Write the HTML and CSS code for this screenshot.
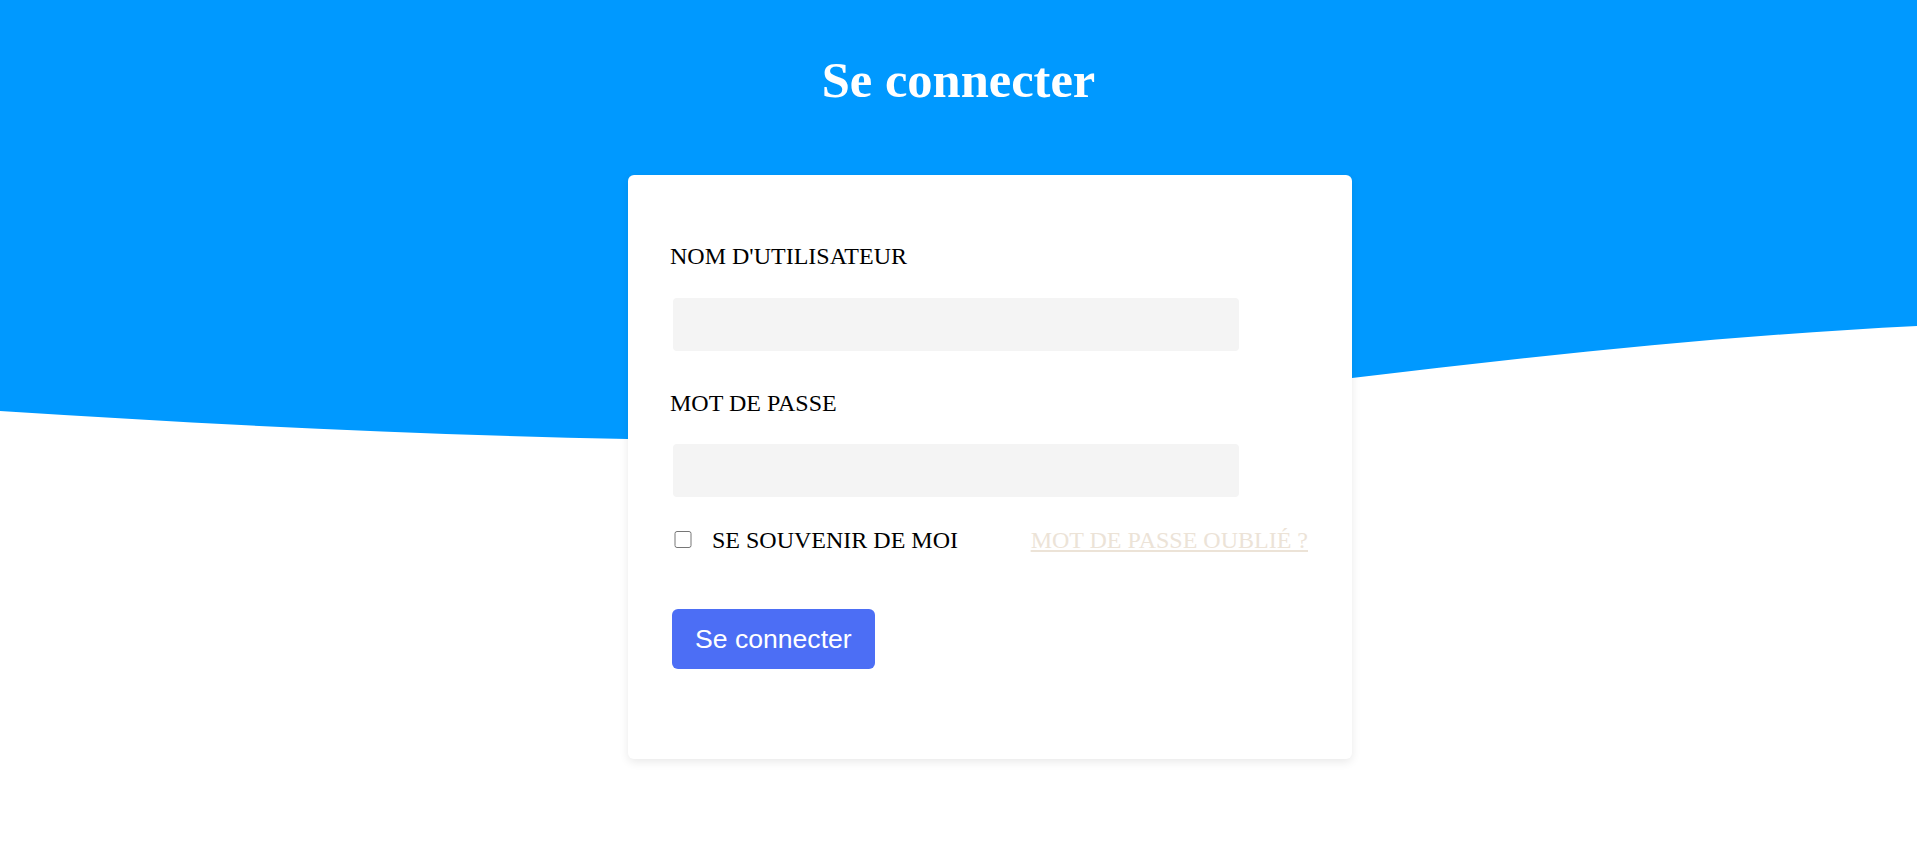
FILE: index.html
```html
<!DOCTYPE html>
<html lang="fr">
<head>
<meta charset="utf-8">
<title>Se connecter</title>
<link rel="stylesheet" href="styles.css">
</head>
<body>
<div class="page">
  <svg class="wave" viewBox="0 0 1917 450" preserveAspectRatio="none" aria-hidden="true">
    <path fill="#0099ff" d="M0 0 L0 411 C209 424.6 419 434.8 628 439 C869 443.8 1111 406.9 1352 378 C1540 355.4 1729 335.4 1917 326 L1917 0 Z"/>
  </svg>
  <h1 class="title">Se connecter</h1>
  <div class="card-wrap">
    <form class="card">
      <label class="field-label" for="user">NOM D'UTILISATEUR</label>
      <input class="field-input" id="user" type="text">
      <label class="field-label second" for="pass">MOT DE PASSE</label>
      <input class="field-input" id="pass" type="password">
      <div class="options">
        <label class="remember"><input class="check" type="checkbox"><span>SE SOUVENIR DE MOI</span></label>
        <a class="forgot" href="#">MOT DE PASSE OUBLIÉ ?</a>
      </div>
      <button class="submit" type="button">Se connecter</button>
    </form>
  </div>
</div>
</body>
</html>
```
FILE: styles.css
```css
html, body {
  margin: 0;
  padding: 0;
  background: #ffffff;
}

body {
  font-family: "Liberation Serif", "Times New Roman", serif;
  color: #000;
}

.page {
  position: relative;
  width: 100%;
  min-height: 862px;
  overflow: hidden;
}

.wave {
  position: absolute;
  top: 0;
  left: 0;
  width: 100%;
  height: 450px;
  z-index: 0;
  display: block;
}

.title {
  position: relative;
  z-index: 1;
  margin: 52px 0 0;
  font-size: 50.5px;
  line-height: 56px;
  font-weight: bold;
  color: #ffffff;
  text-align: center;
}

.card-wrap {
  position: relative;
  z-index: 1;
  display: flex;
  justify-content: center;
  padding-left: 63px;
  margin-top: 67px;
}

.card {
  width: 724px;
  box-sizing: border-box;
  padding: 68px 42px 90px;
  background: #ffffff;
  border-radius: 6px;
  box-shadow: 0 3px 10px rgba(0, 0, 0, 0.09);
  display: flex;
  flex-direction: column;
  align-items: flex-start;
}

.field-label {
  display: block;
  font-size: 24px;
  line-height: 27px;
  margin-bottom: 28px;
}

.field-label.second {
  margin-top: 39px;
  margin-bottom: 27px;
}

.field-input {
  display: block;
  width: 566px;
  height: 53px;
  box-sizing: border-box;
  margin: 0 0 0 3px;
  border: none;
  border-radius: 4px;
  background: #f4f4f4;
  outline: none;
  font-size: 18px;
}

.options {
  margin-top: 30px;
  width: 100%;
  box-sizing: border-box;
  padding-right: 2px;
  display: flex;
  justify-content: space-between;
  align-items: center;
  font-size: 24px;
  line-height: 27px;
}

.remember {
  display: flex;
  align-items: center;
  gap: 20px;
}

.check {
  width: 18px;
  height: 17px;
  margin: -3px 0 0 4px;
}

.forgot {
  color: #ece3d7;
  text-decoration: underline;
}

.submit {
  margin: 55px 0 0 2px;
  height: 60px;
  padding: 0 23px;
  border: none;
  border-radius: 6px;
  background: #4c6ef5;
  color: #ffffff;
  font-family: "Liberation Sans", Arial, sans-serif;
  font-size: 26.6px;
  line-height: 60px;
  cursor: pointer;
}
```
